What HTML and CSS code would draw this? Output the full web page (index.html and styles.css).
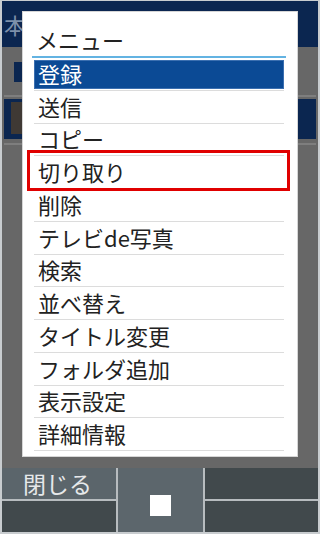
FILE: index.html
```
<!DOCTYPE html>
<html lang="ja">
<head>
  <meta charset="UTF-8" />
  <meta name="viewport" content="width=device-width, initial-scale=1.0"/>
  <title>メニュー</title>
  <link rel="stylesheet" href="styles.css">
</head>
<body>

  <div class="screen">
    <div class="header"><span class="header-title">本</span></div>

    <div class="content">
      <div class="row row-first"><span class="check"></span></div>
      <div class="row row-active"><span class="thumb"></span></div>
    </div>

    <div class="softkeys">
      <div class="key-col">
        <div class="key key-label">閉じる</div>
        <div class="key"></div>
      </div>
      <div class="key-center"><span class="stop"></span></div>
      <div class="key-col">
        <div class="key"></div>
        <div class="key"></div>
      </div>
    </div>

    <!-- popup menu over the list -->
    <div class="dialog">
      <div class="dialog-title">メニュー</div>
      <ul class="menu">
        <li class="item selected"><span class="label">登録</span></li>
        <li class="item"><span class="label">送信</span></li>
        <li class="item"><span class="label">コピー</span></li>
        <li class="item"><span class="label">切り取り</span></li>
        <li class="item"><span class="label">削除</span></li>
        <li class="item"><span class="label">テレビde写真</span></li>
        <li class="item"><span class="label">検索</span></li>
        <li class="item"><span class="label">並べ替え</span></li>
        <li class="item"><span class="label">タイトル変更</span></li>
        <li class="item"><span class="label">フォルダ追加</span></li>
        <li class="item"><span class="label">表示設定</span></li>
        <li class="item"><span class="label">詳細情報</span></li>
      </ul>
    </div>

    <div class="highlight-box"></div>
  </div>

</body>
</html>
```

FILE: styles.css
```
* {
  box-sizing: border-box;
}

body {
  margin: 0;
  font-family: "Noto Sans CJK JP", "Noto Sans", sans-serif;
  background: #c8cccf;
}

.screen {
  position: relative;
  width: 320px;
  height: 534px;
  border: 2px solid #c8cccf;
  border-top-width: 1px;
  display: flex;
  flex-direction: column;
  background: #666;
  overflow: hidden;
}

.header {
  height: 46px;
  background: #0b2650;
  display: flex;
  align-items: center;
  padding-left: 2px;
}

.header-title {
  color: #7d90aa;
  font-size: 22px;
}

.content {
  flex: 1;
  background: #676767;
  padding: 0 2px;
}

.row {
  border-bottom: 2px solid #7e7e7e;
}

.row-first {
  height: 50px;
  padding: 15px 0 0 10px;
}

.check {
  display: block;
  width: 10px;
  height: 20px;
  background: #0b2650;
}

.row-active {
  height: 48px;
  padding: 2px 0;
  background: linear-gradient(#676767 0 2px, #0b2650 2px calc(100% - 4px), #676767 calc(100% - 4px));
}

.thumb {
  display: block;
  width: 13px;
  height: 32px;
  margin: 3px 0 0 7px;
  background: #3f3934;
}

.softkeys {
  height: 64px;
  display: flex;
  gap: 2px;
  background: #b7bcbf;
}

.key-col {
  flex: 1;
  display: flex;
  flex-direction: column;
  gap: 2px;
}

.key-col:first-child {
  flex: 0 0 114px;
}

.key {
  flex: 1;
  background: #41494c;
}

.key-label {
  background: #5b656b;
  color: #e6e8ea;
  font-size: 23px;
  line-height: 31px;
  padding-left: 21px;
}

.key-center {
  flex: 0 0 85px;
  background: #5c666c;
  display: flex;
  align-items: center;
  justify-content: center;
  padding-top: 10px;
}

.stop {
  width: 21px;
  height: 21px;
  background: #fff;
}

.dialog {
  position: absolute;
  top: 10px;
  left: 20px;
  width: 276px;
  height: 446px;
  background: #fff;
  border: 1px solid #d6d6d6;
  padding: 0 13px 0 11px;
}

.dialog-title {
  height: 46px;
  margin: 0 -2px 0 -2px;
  padding: 11px 0 0 4px;
  font-size: 22px;
  color: #222;
  border-bottom: 2px solid #63b3e2;
}

.menu {
  list-style: none;
  margin: 0;
  padding: 0;
}

.item {
  height: 32.75px;
  padding: 2px 0 1px;
  border-bottom: 1px solid #dcdcdc;
}

.label {
  display: flex;
  align-items: center;
  height: 100%;
  padding: 0 0 3px 4px;
  font-size: 22px;
  color: #222;
}

.selected .label {
  background: #0b4a95;
  color: #fff;
  border: 1px solid #3b6fb0;
  padding: 0 0 2px 3px;
}

.highlight-box {
  position: absolute;
  left: 25px;
  top: 149px;
  width: 263px;
  height: 41px;
  border: 3px solid #e00000;
}
```
